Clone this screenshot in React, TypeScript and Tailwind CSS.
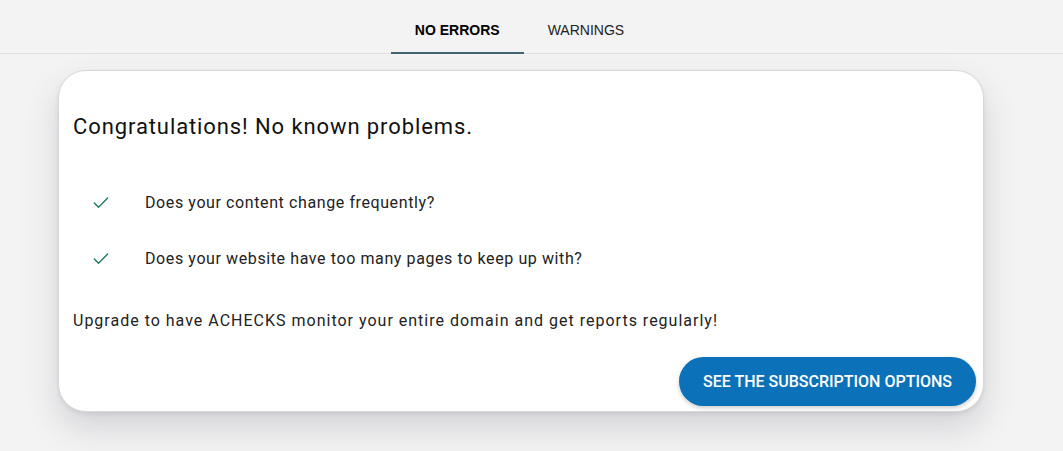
import { Check } from "lucide-react";

const questions = [
  "Does your content change frequently?",
  "Does your website have too many pages to keep up with?",
];

const App = () => {
  return (
    <div className="min-h-screen w-full bg-[#f3f3f3] font-['Roboto',sans-serif]">
      {/* Tabs */}
      <nav className="flex h-[54px] justify-center border-b border-[#e0e0e0] pt-[7px] font-['Liberation_Sans',Arial,sans-serif] text-[14px]">
        <button className="relative px-[24px] font-bold text-black">
          NO ERRORS
          <span className="absolute inset-x-0 bottom-[-1px] h-[2px] bg-[#41636f]" />
        </button>
        <button className="pl-[24px] pr-[48px] text-[#222]">WARNINGS</button>
      </nav>

      {/* Card */}
      <main className="px-[58px] pt-[16px]">
        <section className="w-[926px] rounded-[28px] border border-[#d8d8d8] bg-white pl-[14px] pr-[7px] pt-[42px] pb-[5px] shadow-[0_16px_32px_rgba(60,60,90,0.17),0_2px_4px_rgba(0,0,0,0.08)]">
          <h1 className="text-[22px] leading-[28px] tracking-[0.9px] text-[#111]">
            Congratulations! No known problems.
          </h1>
          <ul className="mt-[50px] flex flex-col gap-[32px]">
            {questions.map((q) => (
              <li key={q} className="flex items-center">
                <Check className="ml-[18px] h-[20px] w-[20px] text-[#1f7a60]" strokeWidth={1.7} />
                <span className="ml-[34px] text-[16px] leading-[24px] tracking-[0.6px] text-[#222]">
                  {q}
                </span>
              </li>
            ))}
          </ul>
          <p className="mt-[38px] text-[16px] leading-[24px] tracking-[1px] text-[#222]">
            Upgrade to have ACHECKS monitor your entire domain and get reports regularly!
          </p>
          <div className="mt-[24px] flex justify-end">
            <button className="h-[49px] rounded-full bg-[#0b72b9] px-[24px] text-[16px] font-medium text-white shadow-[0_2px_4px_rgba(0,0,0,0.2)]">
              SEE THE SUBSCRIPTION OPTIONS
            </button>
          </div>
        </section>
      </main>
    </div>
  );
};

export default App;
